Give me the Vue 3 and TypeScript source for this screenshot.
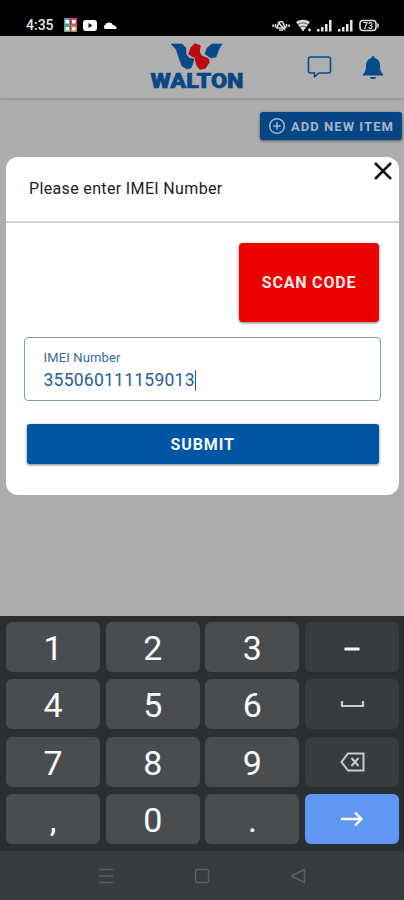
<script setup lang="ts">
import { ref } from 'vue'

interface Key {
  label: string
  kind: 'digit' | 'minus' | 'space' | 'delete' | 'next'
}

const imei = ref<string>('355060111159013')
const digit = (label: string): Key => ({ label, kind: 'digit' })
const keys: Key[] = [
  digit('1'), digit('2'), digit('3'), { label: 'Minus', kind: 'minus' },
  digit('4'), digit('5'), digit('6'), { label: 'Space', kind: 'space' },
  digit('7'), digit('8'), digit('9'), { label: 'Delete', kind: 'delete' },
  digit(','), digit('0'), digit('.'), { label: 'Next', kind: 'next' },
]
</script>

<template>
  <div class="phone">
    <div class="status">
      <span class="time">4:35</span>
      <svg class="notifications" width="56" height="16" viewBox="0 0 56 16">
        <path fill="#5f8fc4" d="M1 1h6.500v7H1z" />
        <path fill="#d5574c" d="M7.500 1H14v7H7.500z" />
        <path fill="#68a77a" d="M1 8h6.500v7H1z" />
        <path fill="#c97b53" d="M7.500 8H14v7H7.500z" />
        <path fill="#fff" d="M2.500 3H6v3.500H2.500zM9 3h3.500v3.500H9zM2.500 10H6v3.500H2.500zM9 10h3.500v3.500H9z" />
        <rect x="20" y="3" width="14" height="11" rx="3" fill="#fff" />
        <path d="m25.500 6 4 2.500-4 2.500z" fill="#111" />
        <path d="M42 12a2.300 2.300 0 0 1 0-4 4.500 4.500 0 0 1 8 0q4 1 3.500 4z" fill="#fff" />
      </svg>
      <svg class="signals" width="110" height="16" viewBox="0 0 110 16">
        <g fill="none" stroke="#ddd" stroke-width="1.600">
          <path d="M4.500 11c2-1 1-6.500 4.500-6.500s2.500 5.500 4.500 6.500zM7 13h4M6 5l7 8M1 7.500v2.500M3.500 7v3.500M14.500 7v3.500M17 7.500v2.500" />
        </g>
        <path d="M24 5a12 12 0 0 1 14 0l-7 9.500z" fill="#ddd" />
        <path d="M26 7.500a9 9 0 0 1 10 0M28 10a6 6 0 0 1 6 0" fill="none" stroke="#333" stroke-width=".8" />
        <circle cx="37.500" cy="13" r="1.400" fill="#ddd" />
        <path d="M45 12h2.500v2.500H45zM49 10h2.500v4.500H49zM53 7h2.500v7.500H53zM57 3h2.500v11.500H57zM66 12h2.500v2.500H66zM70 10h2.500v4.500H70zM74 7h2.500v7.500H74zM78 3h2.500v11.500H78z" fill="#e5e5e5" />
        <rect x="88" y="3.500" width="16" height="10" rx="3" fill="none" stroke="#ddd" stroke-width="1.600" />
        <path d="M106 6.500v4" stroke="#ddd" stroke-width="1.600" />
        <text x="96" y="11.500" text-anchor="middle" fill="#ddd" font-size="8.500" font-weight="700">73</text>
      </svg>
    </div>

    <main class="screen">
      <header class="appbar">
        <svg class="logo" width="98" height="58" viewBox="0 0 98 58">
          <path d="M22 5h11l4 4 0 6 3 4 5 1-1 4-2 5-4 1-5-3-3-8-3-9z" fill="#074886" stroke="#074886" stroke-width=".6" stroke-linejoin="round" />
          <path d="M63 5h10l-3 5-3 8-5 1-6-4 2-6z" fill="#074886" stroke="#074886" stroke-width=".6" stroke-linejoin="round" />
          <path d="m40 15 2-6 4-4 5 2-1 5 2 5 7 3 1 3-4 6-5 1-3-4-2-8-3-1z" fill="#b90b11" stroke="#b90b11" stroke-width="1.400" stroke-linejoin="round" />
          <text x="1.500" y="48.500" textLength="93" lengthAdjust="spacingAndGlyphs" fill="#084784" stroke="#084784" stroke-width=".6" font-size="20" font-weight="900">WALTON</text>
        </svg>
        <svg class="chat" width="26" height="26" viewBox="0 0 26 26">
          <path d="M3.500 2h18q2 0 2 2v12q0 2-2 2H12l-4.500 3.800V18h-4q-2 0-2-2V4q0-2 2-2z" fill="none" stroke="#084a8c" stroke-width="1.600" stroke-linejoin="round" />
        </svg>
        <svg class="bell" width="24" height="26" viewBox="0 0 24 26">
          <path d="M10.500 3q0-2 1.500-2t1.500 2q5.500 1 5.500 8 0 6 3 8v1.500H2V19q3-2 3-8 0-7 5.500-8zM9 22h6q0 2-3 2t-3-2z" fill="#084a8c" />
        </svg>
      </header>
      <div class="toolbar">
        <button class="add">
          <svg width="18" height="18" viewBox="0 0 18 18"><circle cx="9" cy="9" r="7.300" /><path d="M9 5.300v7.400M5.300 9h7.400" /></svg>
          <span>ADD NEW ITEM</span>
        </button>
      </div>

      <section class="dialog">
        <div class="dialog-head">
          <h1>Please enter IMEI Number</h1>
          <button class="close" aria-label="Close">
            <svg width="20" height="20" viewBox="0 0 20 20"><path d="m2 2 16 16M18 2 2 18" /></svg>
          </button>
        </div>
        <div class="dialog-body">
          <button class="scan">SCAN CODE</button>
          <div class="field">
            <span class="label">IMEI Number</span>
            <span class="value">{{ imei }}<i class="caret"></i></span>
          </div>
          <button class="submit">SUBMIT</button>
        </div>
      </section>
    </main>

    <div class="keyboard">
      <button v-for="key in keys" :key="key.label" class="key" :class="key.kind" :aria-label="key.label">
        <span v-if="key.kind === 'digit'">{{ key.label }}</span>
        <svg v-else width="28" height="24" viewBox="0 0 28 24">
          <path v-if="key.kind === 'minus'" d="M6.500 12h15" stroke-width="3" />
          <path v-else-if="key.kind === 'space'" d="M4 8v5h21V8" stroke-width="2.200" />
          <path v-else-if="key.kind === 'delete'" d="M10 3.500h15.500v17H10L3.500 12zM13.500 8l7 8M20.500 8l-7 8" />
          <path v-else d="M3 12h20M17 5.500l6.500 6.500-6.500 6.500" stroke-width="2.400" />
        </svg>
      </button>
    </div>

    <nav class="navbar">
      <svg width="16" height="16" viewBox="0 0 16 16"><path d="M1 1.500h14M1 8h14M1 14.500h14" /></svg>
      <svg width="16" height="16" viewBox="0 0 16 16"><rect x="1.500" y="1.500" width="13" height="13" rx="2" /></svg>
      <svg width="16" height="16" viewBox="0 0 16 16"><path d="M14.500 1.500v13L1.500 8z" stroke-linejoin="round" /></svg>
    </nav>
  </div>
</template>

<style>
body { background: #acacac; }
</style>

<style scoped>
* { box-sizing: border-box; }
.phone { width: 100%; height: 900px; display: flex; flex-direction: column; overflow: hidden; font-family: Roboto, sans-serif; background: #adadad; }
svg { display: block; flex: none; }
button { border: 0; padding: 0; margin: 0; font-family: inherit; }
.status { height: 36px; flex: none; background: #000; display: flex; align-items: flex-start; padding: 17px 22px 0 26px; }
.time { width: 37px; color: #e8e8e8; font-size: 14px; line-height: 17px; font-weight: 500; }
.signals { margin-left: auto; }
.screen { height: 580px; flex: none; }
.appbar { height: 64px; display: flex; align-items: flex-start; padding-left: 149px; border-bottom: 2px solid #9a9a9a; background: #b0b0b0; box-shadow: 0 1px 2px #9995; }
.logo { margin-top: 3px; }
.chat { margin: 19px 0 0 60px; }
.bell { margin: 19px 0 0 28px; }
.toolbar { height: 57px; padding: 12px 2px 0; display: flex; justify-content: flex-end; }
.add { width: 142px; height: 28px; border-radius: 3px; background: #064583; color: #a9b4c4; display: flex; align-items: center; padding-left: 8px; gap: 5px; font-size: 13px; font-weight: 700; letter-spacing: 1.050px; white-space: nowrap; box-shadow: 0 1px 3px #555; }
.add svg { fill: none; stroke: currentColor; stroke-width: 1.500; }
.dialog { height: 338px; margin: 0 5px 0 6px; border-radius: 12px; background: #fff; overflow: hidden; }
.dialog-head { height: 66px; display: flex; align-items: flex-start; justify-content: space-between; border-bottom: 2px solid #d2d2d2; padding: 4px 6px 0 23px; }
h1 { margin: 17px 0 0; font-size: 16px; line-height: 22px; font-weight: 400; letter-spacing: .35px; color: #222; }
.close { background: none; }
.close svg { fill: none; stroke: #151515; stroke-width: 2.500; }
.dialog-body { padding: 20px 18px 0 17.500px; display: flex; flex-direction: column; }
.scan { align-self: flex-end; width: 140px; height: 79px; margin-right: 2px; border-radius: 4px; background: #ed0000; color: #ffe8e8; font-size: 16px; font-weight: 700; letter-spacing: .8px; box-shadow: 0 1px 3px #777; }
.field { height: 64px; margin-top: 15px; padding: 11px 19px 0; border: 1px solid #7c9db7; border-radius: 4px; display: flex; flex-direction: column; color: #386b9b; }
.label { font-size: 13px; line-height: 18px; letter-spacing: .15px; }
.value { display: flex; align-items: center; font-size: 17.500px; line-height: 27px; letter-spacing: .25px; color: #245f98; }
.caret { display: block; width: 1px; height: 21px; background: #245f98; }
.submit { height: 40px; margin: 23px 2px 0 3px; border-radius: 3px; background: #0055a5; color: #f2f7ff; font-size: 16px; font-weight: 700; letter-spacing: .9px; box-shadow: 0 1px 3px #777; }
.keyboard { height: 235px; flex: none; background: #292f32; padding: 6px 5px 6px 6px; display: grid; grid-template-columns: repeat(4, 94px); grid-template-rows: repeat(4, 50px); column-gap: 5.700px; row-gap: 7.300px; }
.key { display: flex; align-items: center; justify-content: center; border-radius: 6px; background: #4a4d4f; color: #fafafa; font-size: 34px; line-height: 50px; }
.key span { display: block; transform: translateY(1px); }
.minus, .space, .delete { background: #373c3f; }
.key svg { fill: none; stroke: #c9cccd; stroke-width: 2; }
.key.minus svg { transform: translateY(2px); }
.key.space svg { transform: translateY(1px); }
.minus svg, .next svg { stroke: #fff; }
.next { background: #6097f4; }
.navbar { height: 49px; flex: none; background: #373c3f; display: flex; align-items: center; justify-content: center; gap: 80px; }
.navbar svg { fill: none; stroke: #5c6062; stroke-width: 1.400; }
</style>
